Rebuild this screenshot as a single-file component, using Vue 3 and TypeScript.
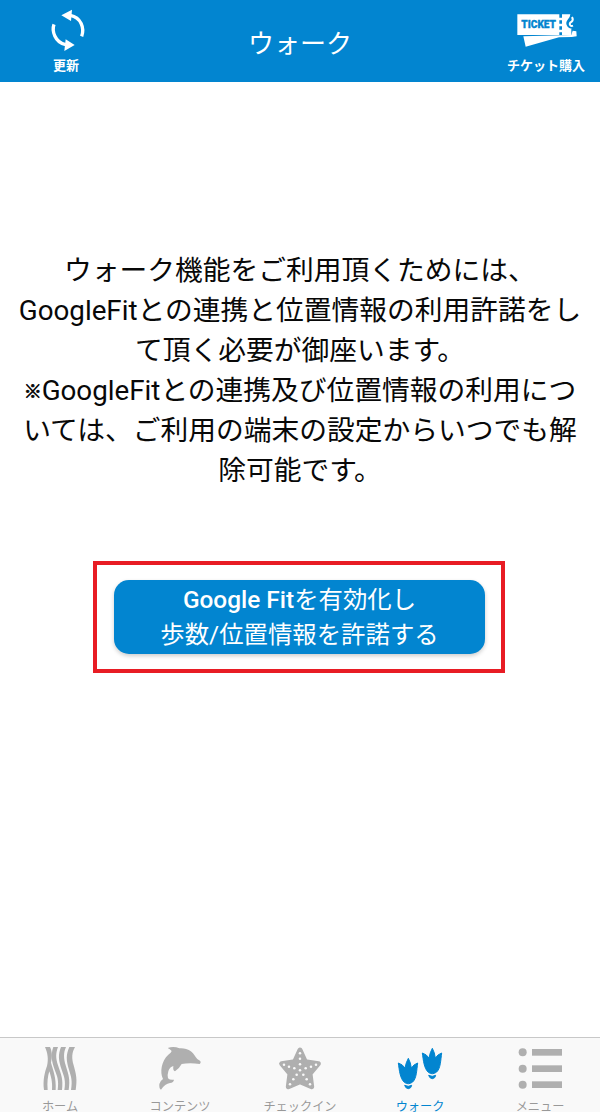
<script setup lang="ts">
interface Tab {
  id: string
  label: string
}

const tabs: Tab[] = [
  { id: 'home', label: 'ホーム' },
  { id: 'contents', label: 'コンテンツ' },
  { id: 'checkin', label: 'チェックイン' },
  { id: 'walk', label: 'ウォーク' },
  { id: 'menu', label: 'メニュー' },
]
const activeTab = 'walk'

interface Line {
  mark?: string
  text: string
}

const message: Line[] = [
  { text: 'ウォーク機能をご利用頂くためには、' },
  { text: 'GoogleFitとの連携と位置情報の利用許諾をし' },
  { text: 'て頂く必要が御座います。' },
  { mark: '※', text: 'GoogleFitとの連携及び位置情報の利用につ' },
  { text: 'いては、ご利用の端末の設定からいつでも解' },
  { text: '除可能です。' },
]

// Perforations on the starfish arms
const dots: [number, number][] = [
  [135, 70], [135, 86], [135, 103], [135, 121],
  [87, 104], [102, 110], [118, 115], [183, 104], [168, 110], [152, 115],
  [125, 134], [115, 148], [105, 163], [145, 134], [155, 148], [165, 163],
]
</script>

<template>
  <div class="screen">
    <header class="header">
      <button class="action refresh">
        <svg width="40" height="44" viewBox="54 27 120 132">
          <g fill="none" stroke="#fff" stroke-width="10">
            <path d="M72 73C65 92 74 127 107 134" />
            <path d="M155 109C164 84 153 52 121 46" />
          </g>
          <path d="M94 46L126 29L123 63Z M134 135L107 118L103 153Z" fill="#fff" />
        </svg>
        <span>更新</span>
      </button>
      <h1>ウォーク</h1>
      <button class="action ticket">
        <svg width="64" height="36" viewBox="75 36 192 108">
          <path d="M100 109L107 140L207 112L245 111L260 109L259 94L248 92L244 105Z" fill="#fff" />
          <path d="M82 43H208V105H82Z M216 43H241Q240 53 234 58Q224 70 233 80Q238 86 244 85V105H216Z" fill="#fff" />
          <path d="M246 51Q251 60 245 65Q236 70 241 76Q244 79 249 77" fill="none" stroke="#fff" stroke-width="6" />
          <path d="M212 48V105" stroke="#fff" stroke-width="10" stroke-dasharray="8 10" stroke-dashoffset="-5" />
          <text x="94" y="83" textLength="104" lengthAdjust="spacingAndGlyphs">TICKET</text>
        </svg>
        <span>チケット購入</span>
      </button>
    </header>

    <main class="content">
      <p class="message">
        <span v-for="line in message" :key="line.text" class="line"><i v-if="line.mark" class="mark">{{ line.mark }}</i>{{ line.text }}</span>
      </p>
      <div class="highlight">
        <button class="allow">
          <span><b>Google Fit</b>を有効化し</span>
          <span>歩数/位置情報を許諾する</span>
        </button>
      </div>
    </main>

    <nav class="tabs">
      <button v-for="tab in tabs" :key="tab.id" class="tab" :class="{ active: tab.id === activeTab }">
        <svg v-if="tab.id === 'home'" width="48" height="48" viewBox="48 42 144 144">
          <path d="M75 51H90C98 68 96 83 93 98C99 120 109 142 107 180H96C98 156 93 140 88 124C83 139 81 158 83 180H72C68 152 74 127 81 108C86 87 83 69 75 51Z" />
          <path d="M100 51H114C107 70 107 84 114 106C124 135 130 149 126 180H113C117 151 112 139 104 119C94 90 92 75 100 51Z" />
          <path d="M123 51H138C130 69 131 84 137 106C146 135 151 149 146 180H133C138 151 132 139 125 119C115 90 114 74 123 51Z" />
          <path d="M148 51H165C155 69 155 84 161 106C169 135 172 149 167 180H153C158 151 153 139 147 119C138 90 138 74 148 51Z" />
        </svg>
        <svg v-else-if="tab.id === 'contents'" width="48" height="48" viewBox="48 42 144 144">
          <path d="M83 54Q101 48 118 55C143 53 158 65 167 81Q171 89 181 93Q184 99 179 102Q164 101 151 100Q136 101 125 102Q119 114 105 124Q98 122 100 108Q89 111 85 124Q81 137 84 145Q90 151 102 149Q101 158 90 159Q75 161 63 179Q57 177 58 162Q60 153 69 147C59 126 64 93 85 74Q94 68 95 63Q90 57 83 54Z" />
        </svg>
        <svg v-else-if="tab.id === 'checkin'" width="48" height="48" viewBox="63 42 144 144">
          <path
            d="M135 60L151 95L190 101L165 131L170 170L135 155L100 170L105 131L80 101L119 95Z"
            stroke="currentColor" stroke-width="15" stroke-linejoin="round"
          />
          <circle v-for="([x, y], i) in dots" :key="i" :cx="x" :cy="y" r="3.8" class="hole" />
        </svg>
        <svg v-else-if="tab.id === 'walk'" class="bold" width="48" height="48" viewBox="48 42 144 144">
          <g v-for="(shift, i) in ['0 0', '72 -30']" :key="i" :transform="`translate(${shift})`">
            <path d="M55 99Q68 103 75 114Q78 97 85 85Q92 97 94 114Q101 103 113 99C110 120 110 145 98 156Q85 166 73 157C60 145 58 121 55 99Z" />
            <path d="M74 166Q85 172 95 166Q94 175 85 176Q76 175 74 166Z" />
          </g>
        </svg>
        <svg v-else width="48" height="48" viewBox="48 42 144 144">
          <g v-for="y in [67, 116, 164]" :key="y">
            <circle cx="68" :cy="y" r="12" />
            <rect x="96" :y="y - 10" width="90" height="20" />
          </g>
        </svg>
        <span>{{ tab.label }}</span>
      </button>
    </nav>
  </div>
</template>

<style>
body {
  margin: 0;
  background: #fff;
}
</style>

<style scoped>
.screen {
  width: 600px;
  height: 1112px;
  display: flex;
  flex-direction: column;
  overflow: hidden;
  background: #fff;
  font-family: Roboto, "Noto Sans CJK JP", sans-serif;
}
button {
  border: 0;
  padding: 0;
  background: none;
  font: inherit;
}
svg {
  display: block;
  flex: none;
}
.header {
  flex: none;
  height: 82px;
  display: grid;
  grid-template-columns: 132px 1fr 108px;
  background: #0285d0;
  color: #fff;
}
h1 {
  margin: 0;
  font-size: 26px;
  line-height: 88px;
  font-weight: 400;
  text-align: center;
  transform: translateX(-12px);
}
.action {
  display: flex;
  flex-direction: column;
  align-items: center;
  color: #fff;
  font-size: 13px;
  line-height: 20px;
  font-weight: 700;
  white-space: nowrap;
}
.refresh {
  padding-top: 9px;
}
.refresh svg {
  margin: 0 0 3px 4px;
}
.ticket {
  padding-top: 12px;
}
.ticket svg {
  margin: 0 0 8px 2px;
}
.ticket text {
  fill: #0285d0;
  stroke: #0285d0;
  stroke-width: 1px;
  font: 900 33px Roboto, sans-serif;
}
.content {
  flex: 1;
  display: flex;
  flex-direction: column;
  align-items: center;
  padding-top: 169px;
}
.message {
  margin: 0 0 70px;
  color: #080808;
  font-size: 27.75px;
  line-height: 40px;
  text-align: center;
}
.line,
.allow span {
  display: block;
  height: 40px;
  white-space: nowrap;
}
.allow span {
  height: 35px;
}
.mark {
  display: inline-block;
  width: 18px;
  font-size: 18px;
  line-height: 20px;
  font-style: normal;
  font-weight: 700;
  vertical-align: 2px;
  -webkit-text-stroke: 0.7px #080808;
}
.highlight {
  box-sizing: border-box;
  width: 412px;
  height: 112px;
  margin-right: 2px;
  padding: 15px 17px;
  border: 4px solid #e81c24;
}
.allow {
  display: block;
  width: 371px;
  height: 74px;
  border-radius: 15px;
  background: #0285d0;
  color: #fff;
  font-size: 24.4px;
  line-height: 35px;
  box-shadow: 0 2px 4px rgba(0, 0, 0, 0.2);
}
.allow b {
  font-weight: 500;
}
.tabs {
  flex: none;
  box-sizing: border-box;
  height: 75px;
  display: grid;
  grid-template-columns: repeat(5, 1fr);
  border-top: 1px solid #c8c8c8;
  background: #f9f9f9;
}
.tab {
  display: flex;
  flex-direction: column;
  align-items: center;
  padding-top: 6px;
  color: #afafaf;
  font-size: 12.2px;
  line-height: 10px;
  white-space: nowrap;
}
.tab svg {
  fill: currentColor;
  margin-bottom: 10px;
}
.tab .bold {
  stroke: currentColor;
  stroke-width: 3px;
}
.tab span {
  height: 10px;
  color: #999;
}
.tab.active,
.tab.active span {
  color: #0285d0;
}
.hole {
  fill: #f9f9f9;
}
</style>
